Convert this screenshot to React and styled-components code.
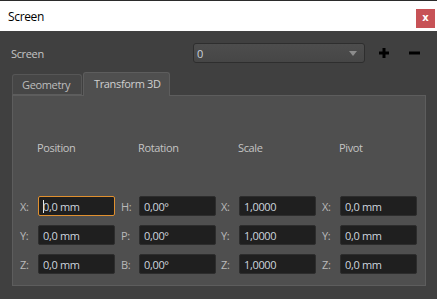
import React from "react";
import styled, { createGlobalStyle } from "styled-components";

const Global = createGlobalStyle`
  html, body { margin: 0; padding: 0; background: #404040; }
  * { box-sizing: border-box; }
`;

const Window = styled.div`
  width: 437px;
  height: 299px;
  background: #404040;
  border-top: 1px solid #2b2b2b;
  font-family: "Open Sans", "Noto Sans", sans-serif;
  letter-spacing: -0.35px;
  display: flex;
  flex-direction: column;
  overflow: hidden;
`;

const TitleBar = styled.div`
  height: 30px;
  background: #ffffff;
  display: flex;
  align-items: center;
  justify-content: space-between;
  padding: 0 2px 0 8px;
`;

const Title = styled.span`
  font-size: 12px;
  color: #000;
`;

const CloseButton = styled.div`
  width: 19px;
  height: 19px;
  margin-top: 5px;
  background: #c75256;
  color: #fff;
  font-family: "DejaVu Sans", sans-serif;
  font-weight: bold;
  font-size: 10px;
  letter-spacing: 0;
  display: flex;
  align-items: center;
  justify-content: center;
  line-height: 1;
  padding-bottom: 2px;
`;

const Body = styled.div`
  padding: 12px 0 0 12px;
  display: flex;
  flex-direction: column;
`;

const ScreenRow = styled.div`
  display: flex;
  align-items: center;
  height: 20px;
  padding-right: 13px;
`;

const FieldLabel = styled.span`
  flex: 1;
  font-size: 11px;
  color: #c4c4c4;
  margin-left: -1px;
`;

const Combo = styled.div`
  width: 172px;
  height: 20px;
  border: 1px solid #2e2e2e;
  border-radius: 3px;
  background: linear-gradient(#4d4d4d, #464646);
  display: flex;
  align-items: center;
  padding: 0 6px 0 3px;
  font-size: 11px;
  color: #c9d2dc;
  justify-content: space-between;
`;

const Arrow = styled.span`
  width: 0;
  height: 0;
  border-left: 4px solid transparent;
  border-right: 4px solid transparent;
  border-top: 5px solid #8c8c8c;
  margin-right: 1px;
`;

const IconButton = styled.div`
  width: 20px;
  height: 20px;
  margin-left: ${(p) => p.$gap}px;
  display: flex;
  align-items: center;
  justify-content: center;
`;

const Tabs = styled.div`
  margin-top: 9px;
  display: flex;
  align-items: flex-end;
  gap: 1px;
  height: 23px;
  position: relative;
  z-index: 1;
`;

const Tab = styled.div`
  height: ${(p) => (p.$active ? 24 : 21)}px;
  width: ${(p) => p.$w}px;
  padding-left: ${(p) => (p.$active ? 10 : 9)}px;
  background: ${(p) => (p.$active ? "#4f4f4f" : "#464646")};
  border: 1px solid ${(p) => (p.$active ? "#5d5d5d" : "#565656")};
  border-bottom: ${(p) => (p.$active ? "none" : "1px solid #5d5d5d")};
  border-radius: 3px 3px 0 0;
  font-size: 11px;
  color: ${(p) => (p.$active ? "#cfcfcf" : "#bdbdbd")};
  display: flex;
  align-items: center;
  padding-bottom: ${(p) => (p.$active ? 3 : 0)}px;
  margin-bottom: ${(p) => (p.$active ? -1 : 0)}px;
`;

const Panel = styled.div`
  width: 414px;
  height: 191px;
  background: #4f4f4f;
  border: 1px solid #5d5d5d;
  padding: 44px 0 0 7px;
  display: flex;
  flex-direction: column;
`;

const Grid = styled.div`
  display: grid;
  grid-template-columns: 101px 100px 101px 100px;
  row-gap: 9px;
`;

const Header = styled.div`
  font-size: 11px;
  color: #c4c4c4;
  padding-left: 17px;
  height: 15px;
  line-height: 15px;
  margin-bottom: 32px;
`;

const Cell = styled.div`
  display: flex;
  align-items: center;
  height: 20px;
`;

const AxisLabel = styled.span`
  width: 18px;
  font-size: 11px;
  color: #b9b9b9;
`;

const Input = styled.div`
  width: 77px;
  height: 20px;
  background: #1f1f1f;
  border: 1px solid ${(p) => (p.$focused ? "#e0902f" : "#2d2d2d")};
  border-radius: 2px;
  font-size: 11px;
  color: #cdd5de;
  display: flex;
  align-items: center;
  padding-left: 4px;
`;

const Caret = styled.span`
  display: inline-block;
  width: 1px;
  height: 13px;
  background: #e8e8e8;
  margin-right: -1px;
`;

const Plus = () => (
  <svg width="10" height="10" viewBox="0 0 10 10">
    <rect x="3.5" y="0" width="3" height="10" fill="#000" />
    <rect x="0" y="3.5" width="10" height="3" fill="#000" />
  </svg>
);

const Minus = () => (
  <svg width="11" height="10" viewBox="0 0 11 10">
    <rect x="0" y="3.5" width="11" height="3" fill="#000" />
  </svg>
);

const headers = ["Position", "Rotation", "Scale", "Pivot"];
const rows = [
  [["X:", "0,0 mm"], ["H:", "0,00°"], ["X:", "1,0000"], ["X:", "0,0 mm"]],
  [["Y:", "0,0 mm"], ["P:", "0,00°"], ["Y:", "1,0000"], ["Y:", "0,0 mm"]],
  [["Z:", "0,0 mm"], ["B:", "0,00°"], ["Z:", "1,0000"], ["Z:", "0,0 mm"]],
];

export default function App() {
  return (
    <>
      <Global />
      <Window>
        <TitleBar>
          <Title>Screen</Title>
          <CloseButton>x</CloseButton>
        </TitleBar>
        <Body>
          <ScreenRow>
            <FieldLabel>Screen</FieldLabel>
            <Combo>
              <span>0</span>
              <Arrow />
            </Combo>
            <IconButton $gap={9}>
              <Plus />
            </IconButton>
            <IconButton $gap={10}>
              <Minus />
            </IconButton>
          </ScreenRow>
          <Tabs>
            <Tab $w={70}>Geometry</Tab>
            <Tab $w={87} $active>Transform 3D</Tab>
          </Tabs>
          <Panel>
            <Grid>
              {headers.map((h) => (
                <Header key={h}>{h}</Header>
              ))}
              {rows.map((row, ri) =>
                row.map(([label, value], ci) => {
                  const focused = ri === 0 && ci === 0;
                  return (
                    <Cell key={`${ri}-${ci}`}>
                      <AxisLabel>{label}</AxisLabel>
                      <Input $focused={focused}>
                        {focused && <Caret />}
                        {value}
                      </Input>
                    </Cell>
                  );
                })
              )}
            </Grid>
          </Panel>
        </Body>
      </Window>
    </>
  );
}
